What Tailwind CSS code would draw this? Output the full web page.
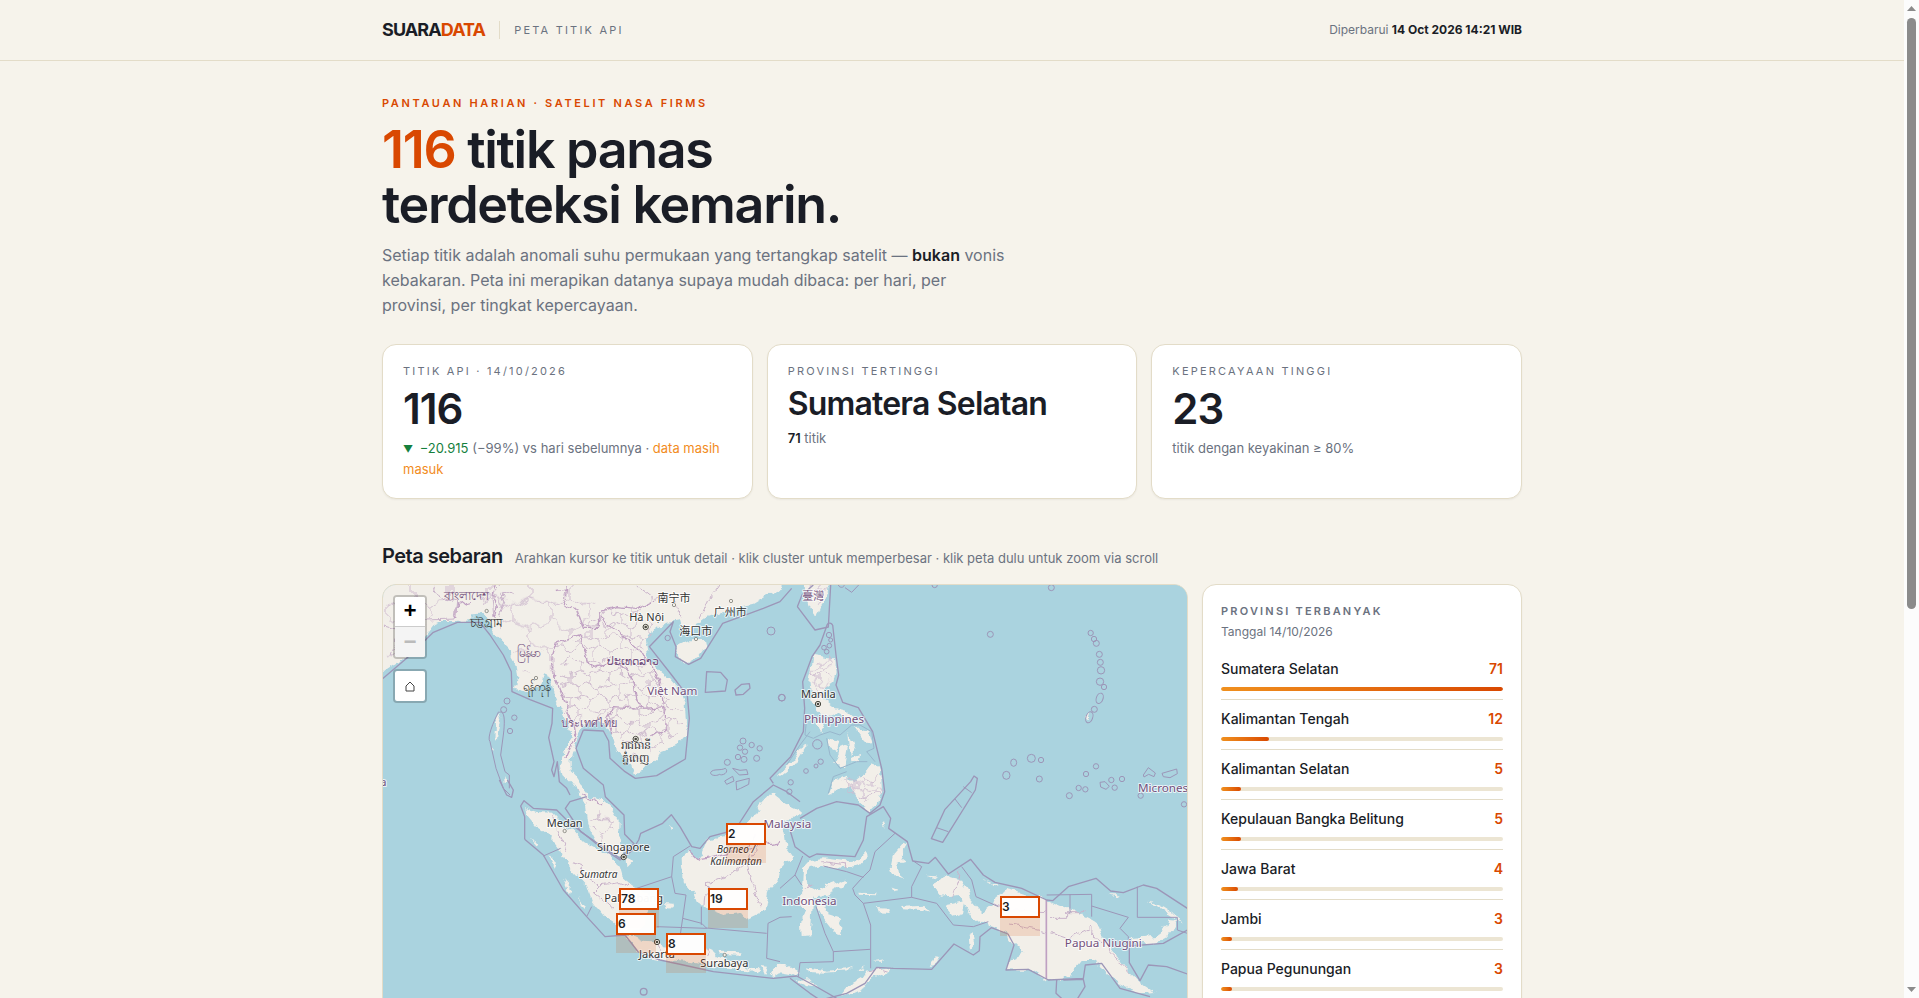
<!doctype html>
<html lang="id">
  <head>
    <meta charset="UTF-8" />
    <meta name="viewport" content="width=device-width, initial-scale=1.0" />
    <title>Suaradata - Peta Titik Api</title>
    <script src="https://cdn.jsdelivr.net/npm/@tailwindcss/browser@4"></script>
  </head>
  <body class="flex h-screen overflow-hidden bg-[#f6f3eb] text-[#1a1d26] font-['Inter',sans-serif]">
    <div class="flex-1 min-w-0 overflow-hidden">
      <header class="border-b border-[#e3dcc8]">
        <div class="max-w-[1180px] mx-auto px-5 h-[60px] flex items-center justify-between">
          <div class="flex items-center gap-[14px]">
            <a href="#" class="text-[18px] leading-6 font-bold tracking-tighter">SUARA<span class="text-[#d94801]">DATA</span></a>
            <span class="w-px h-[18px] bg-[#e3dcc8]"></span>
            <span class="text-[11px] leading-4 tracking-[0.2em] text-[#6b7280]">PETA TITIK API</span>
          </div>
          <p class="text-[12px] leading-5 text-[#6b7280]">
            Diperbarui <b class="font-bold text-[#1a1d26]">14 Oct 2026 14:21 WIB</b>
          </p>
        </div>
      </header>

      <main class="max-w-[1180px] mx-auto px-5 pt-[34px]">
        <section>
          <p class="text-[11px] leading-4 font-semibold tracking-[0.24em] text-[#d94801]">PANTAUAN HARIAN · SATELIT NASA FIRMS</p>
          <h1 class="mt-[11px] text-[52px] leading-[55px] font-semibold tracking-tight">
            <span class="text-[#d94801]">116</span> titik panas<br />terdeteksi kemarin.
          </h1>
          <p class="mt-[11px] max-w-[626px] text-[16px] leading-[25px] text-[#6b7280]">
            Setiap titik adalah anomali suhu permukaan yang tertangkap satelit —
            <b class="font-semibold text-[#1a1d26]">bukan</b> vonis kebakaran. Peta ini merapikan
            datanya supaya mudah dibaca: per hari, per provinsi, per tingkat kepercayaan.
          </p>
        </section>

        <section class="mt-[26px] grid grid-cols-3 gap-[14px]">
          <div class="bg-white border border-[#e3dcc8] rounded-[14px] shadow-xs px-5 py-[18px]">
            <h2 class="text-[11px] leading-4 tracking-[0.2em] text-[#6b7280]">TITIK API · 14/10/2026</h2>
            <p class="mt-[9px] text-[42px] leading-[42px] font-semibold tracking-tight">116</p>
            <p class="mt-2 text-[13px] leading-[21px] text-[#6b7280]">
              <span class="text-[#15803d]"><span class="inline-block w-[13px] text-[10px] leading-none">▼</span> −20.915</span> (−99%) vs hari sebelumnya ·
              <span class="text-[#f28c1e]">data masih masuk</span>
            </p>
          </div>
          <div class="bg-white border border-[#e3dcc8] rounded-[14px] shadow-xs px-5 py-[18px]">
            <h2 class="text-[11px] leading-4 tracking-[0.2em] text-[#6b7280]">PROVINSI TERTINGGI</h2>
            <p class="mt-[9px] text-[32px] leading-[32px] font-semibold tracking-tight">Sumatera Selatan</p>
            <p class="mt-2 text-[13px] leading-[21px] text-[#6b7280]"><b class="font-semibold text-[#1a1d26]">71</b> titik</p>
          </div>
          <div class="bg-white border border-[#e3dcc8] rounded-[14px] shadow-xs px-5 py-[18px]">
            <h2 class="text-[11px] leading-4 tracking-[0.2em] text-[#6b7280]">KEPERCAYAAN TINGGI</h2>
            <p class="mt-[9px] text-[42px] leading-[42px] font-semibold tracking-tight">23</p>
            <p class="mt-2 text-[13px] leading-[21px] text-[#6b7280]">titik dengan keyakinan ≥ 80%</p>
          </div>
        </section>

        <div class="mt-[43px] mb-[14px] flex items-baseline gap-3">
          <h2 class="text-[20px] leading-7 font-semibold tracking-tight">Peta sebaran</h2>
          <p class="text-[13px] leading-5 text-[#6b7280]">Arahkan kursor ke titik untuk detail · klik cluster untuk memperbesar · klik peta dulu untuk zoom via scroll</p>
        </div>

        <section class="grid grid-cols-[minmax(0,1fr)_320px] gap-[14px]">
          <div class="relative h-[562px] overflow-hidden rounded-[14px] border border-[#e3dcc8] bg-[#aad3df]">
            <svg class="block w-full h-full" viewBox="39 30 2412 1680" preserveAspectRatio="xMinYMin slice">
              <defs>
                <filter id="rough" x="0" y="0" width="100%" height="100%">
                  <feTurbulence type="fractalNoise" baseFrequency="0.03" numOctaves="4" seed="4" />
                  <feDisplacementMap in="SourceGraphic" scale="26" xChannelSelector="R" yChannelSelector="G" />
                </filter>
                <filter id="rougher" x="0" y="0" width="100%" height="100%">
                  <feTurbulence type="fractalNoise" baseFrequency="0.025" numOctaves="2" seed="9" />
                  <feDisplacementMap in="SourceGraphic" scale="60" xChannelSelector="R" yChannelSelector="G" />
                </filter>
                <pattern id="cells" width="60" height="72" patternUnits="userSpaceOnUse">
                  <path d="M0 12L30 0L60 12V36L30 48L0 36ZM30 48V72" fill="none" stroke="#cfbccf" stroke-width="3" />
                </pattern>
                <pattern id="cells-wide" width="120" height="140" patternUnits="userSpaceOnUse">
                  <path d="M0 24L60 0L120 24V70L60 94L0 70ZM60 94V140" fill="none" stroke="#cfbccf" stroke-width="3" />
                </pattern>
                <pattern id="cells-small" width="36" height="40" patternUnits="userSpaceOnUse">
                  <path d="M0 7L18 0L36 7V20L18 27L0 20ZM18 27V40" fill="none" stroke="#cdbacf" stroke-width="3" />
                </pattern>
              </defs>

              <!-- land -->
              <g filter="url(#rough)" fill="#f2efe9">
                <rect x="0" y="0" width="2500" height="1720" fill="#aad3df" />
                <path d="M0 0V330L39 292L90 258L130 215L165 180L188 150L215 138L262 138L300 132L325 105L348 115L360 140L368 168L400 200L418 235L437 270L442 315L432 335L470 345L500 345L514 330L522 298L540 305L550 335L556 370L572 405L592 440L602 480L590 520L575 568L580 600L602 622L628 655L645 695L652 750L676 795L712 825L755 845L762 825L745 765L746 735L725 700L700 676L662 668L640 640L618 605L602 588L602 555L610 525L620 495L628 465L645 440L700 446L716 472L732 495L738 532L776 560L796 598L815 592L835 568L862 545L872 528L922 510L945 482L948 440L944 385L930 350L900 315L870 290L850 265L830 235L825 205L842 180L872 155L895 140L930 136L938 165L962 182L972 150L992 135L1040 118L1100 98L1150 86L1190 62L1230 45L1250 0Z" />
                <path d="M928 210L958 196L1002 195L1006 215L985 245L955 262L928 254L918 228Z" />
                <path d="M1300 0L1382 20L1370 75L1352 100L1342 128L1325 105L1308 72Z" />
                <g transform="translate(1230 0)">
                  <path d="M100 240L162 250L167 290L160 322L136 340L128 372L162 398L200 408L232 436L208 434L170 412L140 425L112 402L94 370L88 320L96 280Z" />
                  <path d="M104 436L132 450L124 475L108 460ZM146 488L178 498L172 532L148 520ZM162 562L184 520L204 512L192 580ZM225 458L268 468L278 512L252 496ZM205 470L225 520L212 545ZM212 548L240 540L236 560L214 562ZM-10 600L40 555L72 506L80 512L46 568L0 606ZM150 658L165 620L200 602L220 622L258 590L275 568L296 575L304 612L306 650L292 690L270 708L245 694L228 668L205 640L178 640Z" />
                </g>
                <g transform="translate(0 615)">
                  <path d="M466 84L500 96L546 98L576 130L610 152L642 186L682 208L720 230L745 252L756 290L792 322L836 342L838 390L824 412L822 436L795 450L766 464L734 432L700 404L668 362L654 320L620 284L590 250L562 202L530 160L500 140L470 104Z" />
                  <path d="M764 468L792 468L822 482L870 486L882 508L930 510L990 515L1010 504L1030 512L1042 532L1112 546L1150 572L1100 566L1040 560L960 546L900 541L850 530L800 516L788 492Z" />
                  <path d="M1050 512L1110 514L1104 524L1052 522ZM1135 560L1168 562L1160 580ZM1176 558L1194 560L1186 582ZM1202 580L1216 560L1238 566L1262 556L1290 572L1262 585L1230 580L1212 592Z" />
                  <path d="M535 225L558 245L552 258ZM582 300L608 330L600 342ZM625 350L648 382L640 386ZM480 176L508 192L496 196ZM770 230L790 250L772 268ZM885 366L912 368L906 386L890 384ZM900 132L914 142L906 150Z" />
                  <path d="M935 228L952 214L986 240L1010 182L1062 172L1100 160L1142 120L1165 80L1204 38L1230 60L1262 82L1292 96L1292 108L1250 118L1240 150L1246 200L1276 242L1244 250L1228 270L1222 300L1192 332L1182 392L1130 418L1110 396L1060 402L1030 390L1000 376L984 376L970 340L942 302L936 262Z" />
                </g>
                <g transform="translate(1230 615)">
                  <path d="M72 262L92 240L130 235L200 244L230 240L252 218L264 224L236 256L190 264L130 258L92 264L80 292L86 320L104 330L142 315L190 296L202 302L182 322L150 335L130 350L98 352L98 380L95 420L92 466L62 468L60 430L76 400L62 370L60 338L70 312Z" />
                  <path d="M110 375L130 372L146 402L172 410L190 440L186 466L165 460L140 428ZM340 222L370 188L382 194L362 230L378 242L352 250L358 282L370 302L342 292L332 262ZM288 384L322 386L326 402L294 400ZM360 378L430 374L450 398L420 390L368 388ZM232 338L292 340L292 346L234 344ZM335 322L358 330L340 334Z" />
                  <path d="M440 284L468 286L460 292ZM452 312L502 288L542 300L562 332L570 356L596 386L610 400L640 375L650 352L690 328L742 346L800 358L860 382L920 410L960 440L970 472L988 500L1012 532L1048 580L1072 602L1124 636L1090 640L1040 622L1000 602L970 562L940 540L905 540L880 572L868 592L800 598L760 570L680 568L695 535L730 520L700 490L680 460L640 442L600 428L580 412L556 372L540 345L480 350Z" />
                  <path d="M492 376L560 362L552 398L520 410ZM566 470L580 462L586 495L570 512ZM1058 474L1120 468L1160 440L1166 420L1190 422L1182 445L1160 470L1120 492L1060 486ZM1104 358L1150 380L1192 408L1208 434L1188 416L1140 384ZM985 346L1016 346L1010 352ZM610 298L640 312L660 312L642 318Z" />
                  <path d="M-10 548L46 565L50 574L-8 580ZM78 562L140 572L200 568L222 560L208 574L130 578L84 576ZM232 568L252 558L256 566ZM48 600L82 598L112 620L80 616ZM180 648L210 612L250 590L262 572L334 562L330 576L272 596L250 622L212 640ZM280 544L312 538L308 546ZM455 555L470 525L480 532L466 552ZM310 120L318 126L314 144Z" />
                </g>
                <path d="M378 440L388 410L394 430L384 490L376 500ZM370 515L378 525L372 530ZM402 600L412 620L404 625ZM2150 425L2164 415L2158 435Z" />
              </g>

              <!-- provinces -->
              <g filter="url(#rougher)">
                <rect x="0" y="0" width="2500" height="1720" fill="none" />
                <path fill="url(#cells)" d="M570 210L640 180L700 110L800 90L850 150L820 235L925 385L920 480L800 560L745 490L645 430L610 480L585 400Z" />
                <path fill="url(#cells-wide)" d="M50 30H260V120H190L60 240ZM300 30L700 30L650 160L560 210L545 320L520 280L450 310L415 200Z" />
                <path fill="url(#cells-small)" d="M1330 255H1385V315L1355 335L1345 380L1325 370ZM1400 625L1490 600L1525 590V650L1500 690L1460 665ZM1312 30H1370L1345 100Z" />
                <path fill="url(#cells)" d="M610 620L650 690L730 720L735 790L690 790L655 720Z" />
              </g>
              <g filter="url(#rough)" fill="none" stroke="#c9b3ca" stroke-width="3" stroke-linejoin="round">
                <rect x="0" y="0" width="2500" height="1720" stroke="none" />
                <path d="M255 135L260 80L215 70L190 30M375 125L368 60L395 30M385 125L405 80L395 60L430 50M90 90L150 95L165 135L255 132M40 150L90 165L60 240M590 30L580 70L620 110L640 150L690 155" />
                <path d="M800 30L850 70L900 60L940 130M1050 30L1015 80L985 130" />
                <g stroke="#bfa0c2" stroke-width="4">
                  <path d="M555 50L590 45L582 90L622 105L640 160L688 160L690 115L740 95L800 100L850 75" />
                  <path d="M688 115L710 150L750 165L780 205L830 245L870 320L885 400L888 460L850 485" />
                  <path d="M545 245L560 200L625 180L650 230L665 280L710 270L750 260L790 310L800 370L820 400L885 395" />
                  <path d="M545 245L560 320L580 370L610 450L615 490L590 545M820 400L730 395L710 430L722 480M640 660L700 690" />
                  <path d="M375 125L385 90L368 60L380 30M260 130L262 90L300 80" />
                  <path d="M958 828L985 855L1040 845L1130 820L1150 770M1130 820L1230 800" />
                </g>
                <path d="M545 720L560 770L590 830M610 860L640 870L640 900L690 930L740 920L780 935M690 930L670 950L730 1000M1005 990L1010 930L1080 900L1130 860L1180 800M1130 860L1150 930L1170 1000M860 1110L880 1140M1010 1140L1020 1120" />
                <path d="M1300 940L1330 930M1360 860L1430 870L1430 885M1770 890L1745 965M1870 985L1925 1005L2030 1010M1920 1050L2030 1070M2040 1030L2090 1030L2090 1010L2150 1010M2040 1070L2100 1090L2160 1060L2230 1140L2280 1200M1500 1190L1530 1180L1560 1190" />
              </g>
              <path d="M2029 975V1212" fill="none" stroke="#bfa0c2" stroke-width="5" />

              <!-- maritime boundaries -->
              <g fill="none" stroke="#9c96b8" stroke-width="4" stroke-linejoin="round">
                <path d="M30 318L110 250L190 172L262 142L330 142L360 180L400 240L424 290L426 350L480 374L548 400L546 445L536 488L552 560L545 585L552 605L562 560L568 620L590 640L600 660" />
                <path d="M640 465L700 468L716 498L720 550L765 590L796 610L860 602L946 552L958 430L952 362L905 300L838 215L910 140L900 170L918 215L916 245L956 268L992 250L1058 145L1180 100L1230 80L1265 40" />
                <path d="M640 465L618 520L640 580L700 630L706 665L762 720L764 778L792 806L750 850L690 810L632 770L586 700L600 680L650 665" />
                <path d="M1010 290L1052 292L1072 315L1066 348L1006 352ZM1095 345L1115 328L1138 326L1140 340L1120 358L1098 360Z" />
                <path d="M1282 95L1296 60L1330 30M1282 95L1335 165L1375 156L1382 30" />
                <path d="M1372 148L1350 210L1326 245L1298 320L1304 400L1300 470L1262 545L1200 610L1210 625M1388 150L1398 240L1406 300L1398 330L1418 382L1465 398L1508 470L1535 580L1544 650L1530 690L1500 715L1465 690L1400 680L1340 700L1290 730M1372 148Q1380 140 1388 150" />
                <g transform="translate(0 615)">
                  <path d="M464 178V110L452 78L462 62L490 85L560 90L600 130L640 160L690 200L750 240L786 212L806 180L812 160L878 130L904 104L930 140L965 200L990 205L1020 170L1095 150L1150 65L1210 15L1250 35L1290 65" />
                  <path d="M464 178L520 225L580 330L650 410L705 470L765 465L805 516L870 540L940 555L1030 575L1210 595L1280 588L1330 615L1400 655" />
                  <path stroke-width="3" d="M520 228L572 205M650 410L665 380M800 325L905 290L910 230L960 198M905 290L915 340L948 345L938 415L995 430L1010 445L860 440M938 415L930 470M994 380V435M1008 444L1190 460M1265 410L1230 412L1194 430L1190 535L1230 545" />
                  <circle cx="821" cy="635" r="10" />
                  <path d="M388 0L410 45L425 52L430 30L412 0" />
                </g>
                <g transform="translate(1230 615)">
                  <path d="M30 150L45 200L88 232L110 222L225 230L250 180L260 110L310 80L332 115L326 145L382 185L398 243L446 250L466 232L505 282L572 238L610 285L645 307L725 325L800 360L818 362L865 320L948 295L992 333L1030 338L1090 315L1130 325L1222 385" />
                  <path d="M30 595L90 640L120 660M130 658L200 640L255 610L290 562L340 565L455 568L522 492L580 525L598 512L600 470L634 443L684 462L702 495L678 570L745 568L805 600L910 595L916 555L965 550L1020 625L1110 650" />
                  <path d="M1222 450L1150 490L1048 498V548L1080 602L1105 555L1160 560L1222 582" />
                  <path d="M454 176L495 88L572 5L582 -12L592 -5L586 30L488 187Z" />
                  <path stroke-width="3" d="M470 143L505 155M525 57L545 83M550 20L575 38M68 228L45 285L0 325M45 285L65 315M345 160L285 215L270 270L245 295L218 325L225 345L250 370L395 352L470 370L520 435L580 440L625 425M395 352V320L425 260L400 243M130 258L200 275L250 292M250 370L272 435V565M108 380L135 460L160 515L270 508M160 515V545L60 548L55 590M545 260L575 300L588 350L655 380M800 345L935 343V410M870 343V400M935 378L1045 412L1020 445L1045 470V495M1072 320V412H1192V450L1222 460" />
                  <path d="M830 600L828 640L850 660M850 600L910 598L915 620L890 660" />
                </g>
                <g stroke-width="3">
                  <path d="M386 410C370 440 350 490 360 500L378 580L400 640L420 660M388 412C405 405 405 440 400 480L392 540L405 590L418 600V640" />
                  <circle cx="411" cy="378" r="9" /><circle cx="401" cy="404" r="9" /><circle cx="433" cy="428" r="8" /><circle cx="420" cy="468" r="8" />
                  <circle cx="893" cy="189" r="8" /><circle cx="1203" cy="168" r="12" /><circle cx="1236" cy="368" r="10" />
                  <circle cx="1119" cy="498" r="9" /><circle cx="1145" cy="510" r="8" /><circle cx="1169" cy="520" r="8" /><circle cx="1110" cy="518" r="8" /><circle cx="1125" cy="530" r="8" /><circle cx="1104" cy="546" r="8" /><circle cx="1122" cy="553" r="9" /><circle cx="1160" cy="550" r="9" /><circle cx="1072" cy="562" r="9" />
                  <path d="M1022 592C1030 580 1050 588 1066 580C1078 590 1060 604 1048 598C1040 604 1020 602 1022 592ZM1088 580L1110 586L1130 584L1134 598L1108 600ZM1064 618L1088 604L1092 618L1070 628ZM1098 620L1138 610L1136 628L1112 640L1100 645Z" />
                  <g transform="translate(1230 0)">
                    <circle cx="464" cy="30" r="8" /><circle cx="814" cy="38" r="9" /><circle cx="631" cy="178" r="9" /><circle cx="932" cy="174" r="8" /><circle cx="942" cy="192" r="8" /><circle cx="949" cy="205" r="9" /><circle cx="958" cy="238" r="9" /><circle cx="961" cy="262" r="9" /><circle cx="963" cy="286" r="11" /><circle cx="960" cy="320" r="11" /><circle cx="972" cy="336" r="8" /><ellipse cx="959" cy="370" rx="10" ry="16" transform="rotate(20 959 370)" /><circle cx="943" cy="403" r="9" /><ellipse cx="928" cy="427" rx="10" ry="17" transform="rotate(20 928 427)" />
                    <ellipse cx="701" cy="563" rx="9" ry="11" /><circle cx="754" cy="550" r="12" /><circle cx="783" cy="555" r="8" /><ellipse cx="679" cy="601" rx="11" ry="12" /><circle cx="778" cy="612" r="9" /><circle cx="948" cy="574" r="8" /><circle cx="918" cy="597" r="8" /><circle cx="896" cy="639" r="8" /><circle cx="916" cy="643" r="8" /><circle cx="868" cy="662" r="9" /><circle cx="994" cy="615" r="8" /><circle cx="1026" cy="612" r="8" /><circle cx="1004" cy="638" r="8" /><circle cx="1212" cy="688" r="8" /><circle cx="1082" cy="662" r="8" />
                    <path d="M960 622L975 620L988 634L978 643L962 636ZM1090 600L1105 578L1126 594L1122 605L1106 598L1092 606ZM1146 595L1190 582L1192 596L1170 608L1150 605Z" />
                    <circle cx="5" cy="368" r="10" /><circle cx="112" cy="508" r="14" /><circle cx="122" cy="560" r="8" /><circle cx="108" cy="573" r="6" /><circle cx="78" cy="588" r="7" /><circle cx="32" cy="622" r="8" /><circle cx="28" cy="650" r="8" /><circle cx="147" cy="180" r="8" /><circle cx="132" cy="218" r="7" /><circle cx="148" cy="212" r="7" /><circle cx="140" cy="230" r="7" /><circle cx="152" cy="195" r="6" />
                    <path stroke="#98b6cc" d="M80 430L75 480L100 490L120 480L150 470L180 480L215 450L240 450L275 470L282 520L260 530L285 560M140 490L150 540L180 580L205 570L230 560L262 560M20 570L60 510L90 470M145 655L160 605L200 590" />
                    <path d="M175 30C180 42 195 36 192 30M195 38L215 52L236 30" />
                  </g>
                </g>
              </g>

              <!-- towns -->
              <g fill="#f2efe9" stroke="#6b6b64" stroke-width="2">
                <circle cx="350" cy="108" r="5" /><circle cx="498" cy="309" r="5" /><circle cx="912" cy="90" r="5" /><circle cx="1083" cy="78" r="5" /><circle cx="978" cy="192" r="5" /><circle cx="584" cy="768" r="5" /><circle cx="1064" cy="1140" r="5" />
              </g>
              <g fill="#f2efe9" stroke="#47473e" stroke-width="3">
                <circle cx="827" cy="156" r="8" /><circle cx="797" cy="492" r="8" /><circle cx="1344" cy="387" r="8" /><circle cx="761" cy="846" r="8" /><circle cx="861" cy="1101" r="8" />
              </g>
              <g fill="#47473e">
                <circle cx="827" cy="156" r="4" /><circle cx="797" cy="492" r="4" /><circle cx="1344" cy="387" r="4" /><circle cx="761" cy="846" r="4" /><circle cx="861" cy="1101" r="4" />
              </g>

              <!-- place names -->
              <g class="font-['Noto_Sans','Noto_Sans_CJK_SC',sans-serif]" font-size="33" text-anchor="middle" fill="#333" stroke="#fff" stroke-opacity=".75" stroke-width="6" stroke-linejoin="round" paint-order="stroke">
                <g font-size="36" stroke="none">
                  <text x="350" y="156">চট্টগ্রাম</text>
                  <text x="498" y="349">ရန်ကုန်</text>
                  <text x="288" y="75" fill="#73507c">বাংলাদেশ</text>
                  <text x="476" y="247" fill="#73507c">မြန်မာ</text>
                </g>
                <g stroke-width="3">
                  <text x="797" y="522">រាជធានី</text>
                  <text x="797" y="562">ភ្នំពេញ</text>
                  <text x="788" y="270" fill="#73507c">ປະເທດລາວ</text>
                  <text x="657" y="455" fill="#73507c">ประเทศไทย</text>
                </g>
                <text x="830" y="138">Hà Nội</text>
                <text x="912" y="80">南宁市</text>
                <text x="1081" y="123">广州市</text>
                <text x="977" y="181">海口市</text>
                <text x="1345" y="370">Manila</text>
                <text x="584" y="756">Medan</text>
                <text x="760" y="829">Singapore</text>
                <text x="791" y="981">Palembang</text>
                <text x="861" y="1150">Jakarta</text>
                <text x="1063" y="1175">Surabaya</text>
                <g font-size="30" font-style="italic">
                  <text x="685" y="908">Sumatra</text>
                  <text x="1098" y="834">Borneo /</text>
                  <text x="1098" y="869">Kalimantan</text>
                </g>
                <g font-size="35" fill="#73507c">
                  <text x="907" y="360">Việt Nam</text>
                  <text x="1330" y="75" font-size="33" class="font-['Noto_Sans_CJK_TC',sans-serif]">臺灣</text>
                  <text x="1392" y="443">Philippines</text>
                  <text x="1252" y="758">Malaysia</text>
                  <text x="1318" y="989">Indonesia</text>
                  <text x="2200" y="1116">Papua Niugini</text>
                  <text x="2304" y="650" text-anchor="start">Micrones</text>
                  <text x="50" y="634" text-anchor="end">a</text>
                </g>
              </g>
            </svg>

            <div class="absolute top-[10px] left-[10px] flex flex-col gap-[10px]">
              <div class="w-[34px] rounded-sm border-2 border-black/20 bg-clip-padding bg-white overflow-hidden">
                <button aria-label="Perbesar" class="flex w-full h-[30px] pt-[3px] items-center justify-center border-b border-[#ccc] bg-white text-[22px] leading-none font-bold text-black font-['Liberation_Mono',monospace]">+</button>
                <button aria-label="Perkecil" class="flex w-full h-[30px] pt-[3px] items-center justify-center bg-[#f4f4f4] text-[22px] leading-none font-bold text-[#bbb] font-['Liberation_Mono',monospace]">−</button>
              </div>
              <button aria-label="Tampilan awal" class="flex size-[34px] items-center justify-center rounded-sm border-2 border-black/20 bg-clip-padding bg-white">
                <svg class="w-[10px] h-[11px]" viewBox="0 0 10 11"><path d="M1 5L5 1L9 5V10H1Z" fill="none" stroke="#444" /></svg>
              </button>
            </div>

            <!-- clusters -->
            <div class="absolute left-[343px] top-[238px] size-[40px] bg-[#d94801]/15"><div class="h-[22px] border-2 border-[#d94801] bg-white/97 text-[12px] leading-[18px] font-semibold">2</div></div>
            <div class="absolute left-[236px] top-[303px] size-[40px] bg-[#d94801]/15"><div class="h-[22px] border-2 border-[#d94801] bg-white/97 text-[12px] leading-[18px] font-semibold">78</div></div>
            <div class="absolute left-[325px] top-[303px] size-[40px] bg-[#d94801]/15"><div class="h-[22px] border-2 border-[#d94801] bg-white/97 text-[12px] leading-[18px] font-semibold">19</div></div>
            <div class="absolute left-[233px] top-[328px] size-[40px] bg-[#d94801]/15"><div class="h-[22px] border-2 border-[#d94801] bg-white/97 text-[12px] leading-[18px] font-semibold">6</div></div>
            <div class="absolute left-[283px] top-[348px] size-[40px] bg-[#d94801]/15"><div class="h-[22px] border-2 border-[#d94801] bg-white/97 text-[12px] leading-[18px] font-semibold">8</div></div>
            <div class="absolute left-[617px] top-[311px] size-[40px] bg-[#d94801]/15"><div class="h-[22px] border-2 border-[#d94801] bg-white/97 text-[12px] leading-[18px] font-semibold">3</div></div>
          </div>

          <aside class="bg-white border border-[#e3dcc8] rounded-[14px] shadow-xs p-[18px]">
            <h3 class="text-[11px] leading-4 font-semibold tracking-[0.2em] text-[#6b7280]">PROVINSI TERBANYAK</h3>
            <p class="mt-[3px] text-[12px] leading-5 text-[#6b7280]">Tanggal 14/10/2026</p>
            <ol id="provinces" class="mt-2 divide-y divide-[#e3dcc8]"></ol>
          </aside>
        </section>
      </main>
    </div>

    <!-- scroll rail -->
    <div class="w-[15px] shrink-0 flex flex-col items-center justify-between bg-[#fcfcfc] py-[6px]">
      <svg class="w-[9px] h-[5px]" viewBox="0 0 9 5"><path d="M0 5L4.500 0L9 5Z" fill="#8b8b8b" /></svg>
      <div class="flex-1 w-[9px] pt-[7px]"><div class="h-[61%] rounded-full bg-[#8b8b8b]"></div></div>
      <svg class="w-[9px] h-[5px]" viewBox="0 0 9 5"><path d="M0 0L4.500 5L9 0Z" fill="#8b8b8b" /></svg>
    </div>
  </body>

  <script>
    const provinces = [
      ["Sumatera Selatan", 71],
      ["Kalimantan Tengah", 12],
      ["Kalimantan Selatan", 5],
      ["Kepulauan Bangka Belitung", 5],
      ["Jawa Barat", 4],
      ["Jambi", 3],
      ["Papua Pegunungan", 3],
    ];

    const max = provinces[0][1];

    document.getElementById("provinces").innerHTML = provinces
      .map(
        ([name, total]) => `
          <li class="pt-2 pb-2">
            <div class="flex justify-between text-[14px] leading-[22px]">
              <span class="font-medium">${name}</span>
              <span class="font-semibold text-[#d94801]">${total}</span>
            </div>
            <div class="mt-[7px] h-1 rounded-full bg-[#ece5d3] overflow-hidden">
              <div class="h-full rounded-full bg-linear-to-r from-[#f0901e] to-[#d94801]" style="width: ${Math.round((total / max) * 100)}%"></div>
            </div>
          </li>`
      )
      .join("");
  </script>
</html>
